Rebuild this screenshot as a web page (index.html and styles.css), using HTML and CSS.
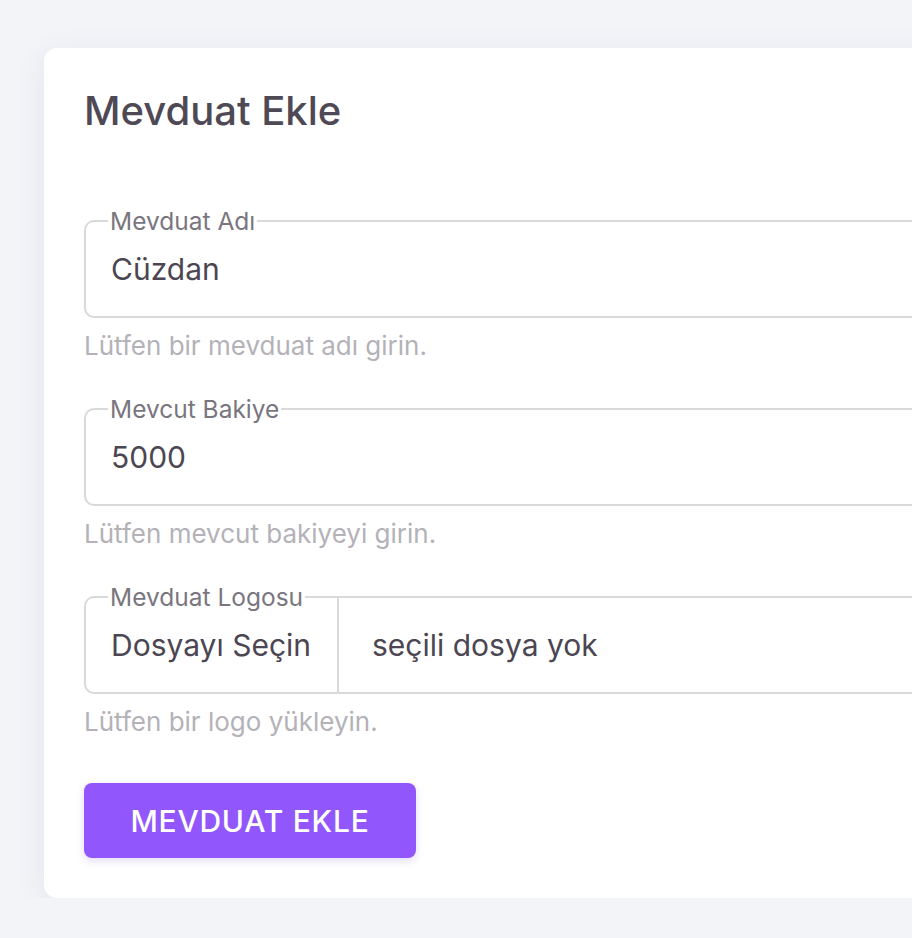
FILE: index.html
```html
<!DOCTYPE html>
<html lang="tr">

<head>
    <meta charset="UTF-8">
    <meta name="viewport" content="width=device-width, initial-scale=1.0">
    <title>Mevduat Ekle</title>

    <link rel="stylesheet" href="styles.css">

</head>

<body>

    <div class="card">

        <h1 class="card-title">Mevduat Ekle</h1>

        <form class="deposit-form">

            <div class="field">
                <fieldset class="field-box">
                    <legend>Mevduat Adı</legend>
                    <input type="text" id="name" name="name" value="Cüzdan">
                </fieldset>
                <p class="hint">Lütfen bir mevduat adı girin.</p>
            </div>

            <div class="field">
                <fieldset class="field-box">
                    <legend>Mevcut Bakiye</legend>
                    <input type="text" id="balance" name="balance" value="5000">
                </fieldset>
                <p class="hint">Lütfen mevcut bakiyeyi girin.</p>
            </div>

            <div class="field">
                <fieldset class="field-box file-box">
                    <legend>Mevduat Logosu</legend>
                    <div class="file-row">
                        <label class="file-btn" for="logo">Dosyayı Seçin</label>
                        <span class="file-name">seçili dosya yok</span>
                        <input type="file" id="logo" name="logo" class="file-input">
                    </div>
                </fieldset>
                <p class="hint">Lütfen bir logo yükleyin.</p>
            </div>

            <button type="submit" class="submit-btn">Mevduat Ekle</button>

        </form>

    </div>

</body>
</html>
```

FILE: styles.css
```css
html, body {
    overflow: hidden;
}

body {
    margin: 0;
    background-color: #f3f4f8;
    font-family: Inter, "Noto Sans", sans-serif;
    color: #4b4651;
}

.card {
    margin: 48px 0 0 44px;
    width: 1000px;
    padding: 39px 40px 40px 40px;
    background-color: #fff;
    border-radius: 13px;
    box-shadow: 0 6px 30px rgba(60, 60, 90, 0.08);
    box-sizing: border-box;
}

.card-title {
    margin: 0 0 71px 0;
    font-size: 40px;
    font-weight: 500;
    line-height: 48px;
    color: #4e4955;
}

.field {
    margin-bottom: 32px;
}

.field-box {
    margin: 0;
    padding: 0 0 15px 22px;
    border: 2px solid #d9d9db;
    border-radius: 10px;
}

.field-box legend {
    padding: 0 2px;
    font-size: 24.5px;
    line-height: 30px;
    color: #7a767f;
}

.field-box input {
    display: block;
    width: 100%;
    height: 65px;
    padding: 0 3px;
    border: none;
    outline: none;
    font-family: inherit;
    font-size: 30px;
    color: #4b4651;
    background: transparent;
    box-sizing: border-box;
}

/* dosya alanı */
.file-box {
    padding-bottom: 0;
}

.file-row {
    display: flex;
    align-items: center;
    height: 94px;
    margin: -14px 0 0 -22px;
}

.file-btn {
    display: flex;
    align-items: center;
    height: 100%;
    padding: 0 26px 0 25px;
    border-right: 2px solid #d9d9db;
    font-size: 30px;
}

.file-name {
    padding-left: 33px;
    font-size: 30px;
}

.file-input {
    display: none !important;
}

.hint {
    margin: 12px 0 0 0;
    font-size: 26px;
    line-height: 32px;
    color: #b4b2b8;
}

.submit-btn {
    display: block;
    margin-top: 45px;
    width: 332px;
    height: 75px;
    border: none;
    border-radius: 8px;
    background-color: #9157fd;
    color: #fff;
    font-family: inherit;
    font-size: 30px;
    font-weight: 500;
    letter-spacing: 0.75px;
    text-transform: uppercase;
    box-shadow: 0 3px 8px rgba(120, 80, 200, 0.2);
}
```
